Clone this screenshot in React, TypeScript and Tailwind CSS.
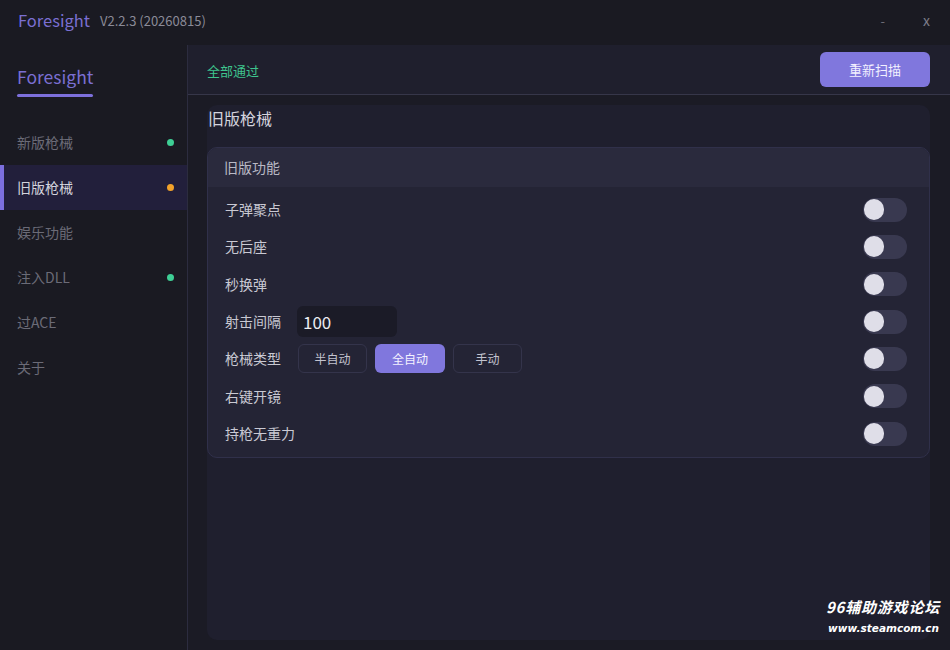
import React from "react";

const font = { fontFamily: '"Noto Sans CJK SC", "Noto Sans", sans-serif' };

const navItems: { label: string; dot?: string; active?: boolean }[] = [
  { label: "新版枪械", dot: "bg-[#3ecf95]" },
  { label: "旧版枪械", dot: "bg-[#f2a22a]", active: true },
  { label: "娱乐功能" },
  { label: "注入DLL", dot: "bg-[#3ecf95]" },
  { label: "过ACE" },
  { label: "关于" },
];

function Toggle() {
  return (
    <div className="w-[44px] h-[24px] rounded-full bg-[#393950] flex items-center pl-[1px]">
      <div className="w-[20px] h-[21px] rounded-full bg-[#dfdee8]" />
    </div>
  );
}

function Row({ label, children }: { label: string; children?: React.ReactNode }) {
  return (
    <div className="h-[37.33px] flex items-center pl-[17px] pr-[22px]">
      <span className="text-[14px] text-[#c9c9d3] w-[56px] shrink-0 whitespace-nowrap">{label}</span>
      <div className="flex-1 flex items-center pl-[16px]">{children}</div>
      <Toggle />
    </div>
  );
}

export default function App() {
  return (
    <div className="w-[950px] h-[650px] bg-[#1a1a22] flex flex-col relative overflow-hidden" style={font}>
      {/* title bar */}
      <div className="h-[45px] shrink-0 flex items-center pl-[18px] pr-[20px] pb-[4px]">
        <span className="text-[16.5px] text-[#7a6fd2] leading-none">Foresight</span>
        <span className="text-[13px] text-[#8b8b98] ml-[10px] leading-none">V2.2.3 (20260815)</span>
        <div className="flex-1" />
        <span className="text-[13px] text-[#6c6c78] mr-[38px]">-</span>
        <span className="text-[14px] text-[#7c7c88]">x</span>
      </div>

      <div className="flex-1 flex min-h-0">
        {/* sidebar */}
        <div className="w-[187px] shrink-0 flex flex-col">
          <div className="h-[75px] pl-[17px] pt-[20px]">
            <div className="inline-flex flex-col">
              <span className="text-[17.5px] text-[#7a6fd2] leading-[24px]">Foresight</span>
              <div className="h-[3px] bg-[#7d70dc] mt-[5px] w-[76px] rounded-full" />
            </div>
          </div>
          {navItems.map((n) => (
            <div
              key={n.label}
              className={`h-[45px] flex items-center pl-[17px] pr-[13px] relative ${n.active ? "bg-[#221f3b]" : ""}`}
            >
              {n.active && <div className="absolute left-0 top-0 bottom-0 w-[4px] bg-[#7c6fde]" />}
              <span className={`text-[14px] ${n.active ? "text-[#d3d3dd]" : "text-[#6b6b77]"}`}>{n.label}</span>
              <div className="flex-1" />
              {n.dot && <div className={`w-[7px] h-[7px] rounded-full ${n.dot}`} />}
            </div>
          ))}
        </div>

        {/* main */}
        <div className="flex-1 flex flex-col border-l border-[#2c2c3f] min-w-0">
          <div className="h-[50px] shrink-0 bg-[#1f1f2d] border-b border-[#363649] flex items-center justify-between pl-[19px] pr-[20px]">
            <span className="text-[13px] text-[#3ec48d] mt-[2px]">全部通过</span>
            <button className="w-[110px] h-[35px] rounded-[6px] bg-[#8077dd] text-[13px] text-[#f2f0ff]">重新扫描</button>
          </div>
          <div className="flex-1 bg-[#1b1b25] pl-[19px] pr-[20px] pt-[10px] pb-[10px] flex min-h-0">
            <div className="flex-1 bg-[#1f1f2e] rounded-[10px] flex flex-col">
              <div className="h-[26px] mb-[16px] flex items-center pl-[1px] text-[16px] text-[#d4d4de]">旧版枪械</div>
              <div className="border border-[#30304a] rounded-[10px] overflow-hidden bg-[#242435]">
                <div className="h-[39px] bg-[#2a2a3d] flex items-center pl-[16px] text-[14px] text-[#b9b9c5]">旧版功能</div>
                <div className="pt-[4px] pb-[5px]">
                  <Row label="子弹聚点" />
                  <Row label="无后座" />
                  <Row label="秒换弹" />
                  <Row label="射击间隔">
                    <div className="w-[100px] h-[31px] rounded-[6px] bg-[#1b1b27] flex items-center pl-[6px] text-[17px] text-[#ececf2]">100</div>
                  </Row>
                  <Row label="枪械类型">
                    <div className="flex gap-[8px] ml-[1px]">
                      <button className="w-[69px] h-[29px] rounded-[6px] border border-[#34344b] text-[12px] text-[#c3c3cf]">半自动</button>
                      <button className="w-[70px] h-[29px] rounded-[6px] bg-[#8077dd] text-[12px] text-[#f4f2ff]">全自动</button>
                      <button className="w-[69px] h-[29px] rounded-[6px] border border-[#34344b] text-[12px] text-[#c3c3cf]">手动</button>
                    </div>
                  </Row>
                  <Row label="右键开镜" />
                  <Row label="持枪无重力" />
                </div>
              </div>
            </div>
          </div>
        </div>
      </div>

      {/* watermark */}
      <div className="absolute right-[10px] bottom-[17px] flex flex-col items-end text-white italic font-bold leading-none">
        <span className="text-[15px] tracking-[0.8px]">96辅助游戏论坛</span>
        <span className="text-[10.5px] mt-[9px] mr-[1px]" style={{ fontFamily: '"DejaVu Sans", sans-serif' }}>www.steamcom.cn</span>
      </div>
    </div>
  );
}
